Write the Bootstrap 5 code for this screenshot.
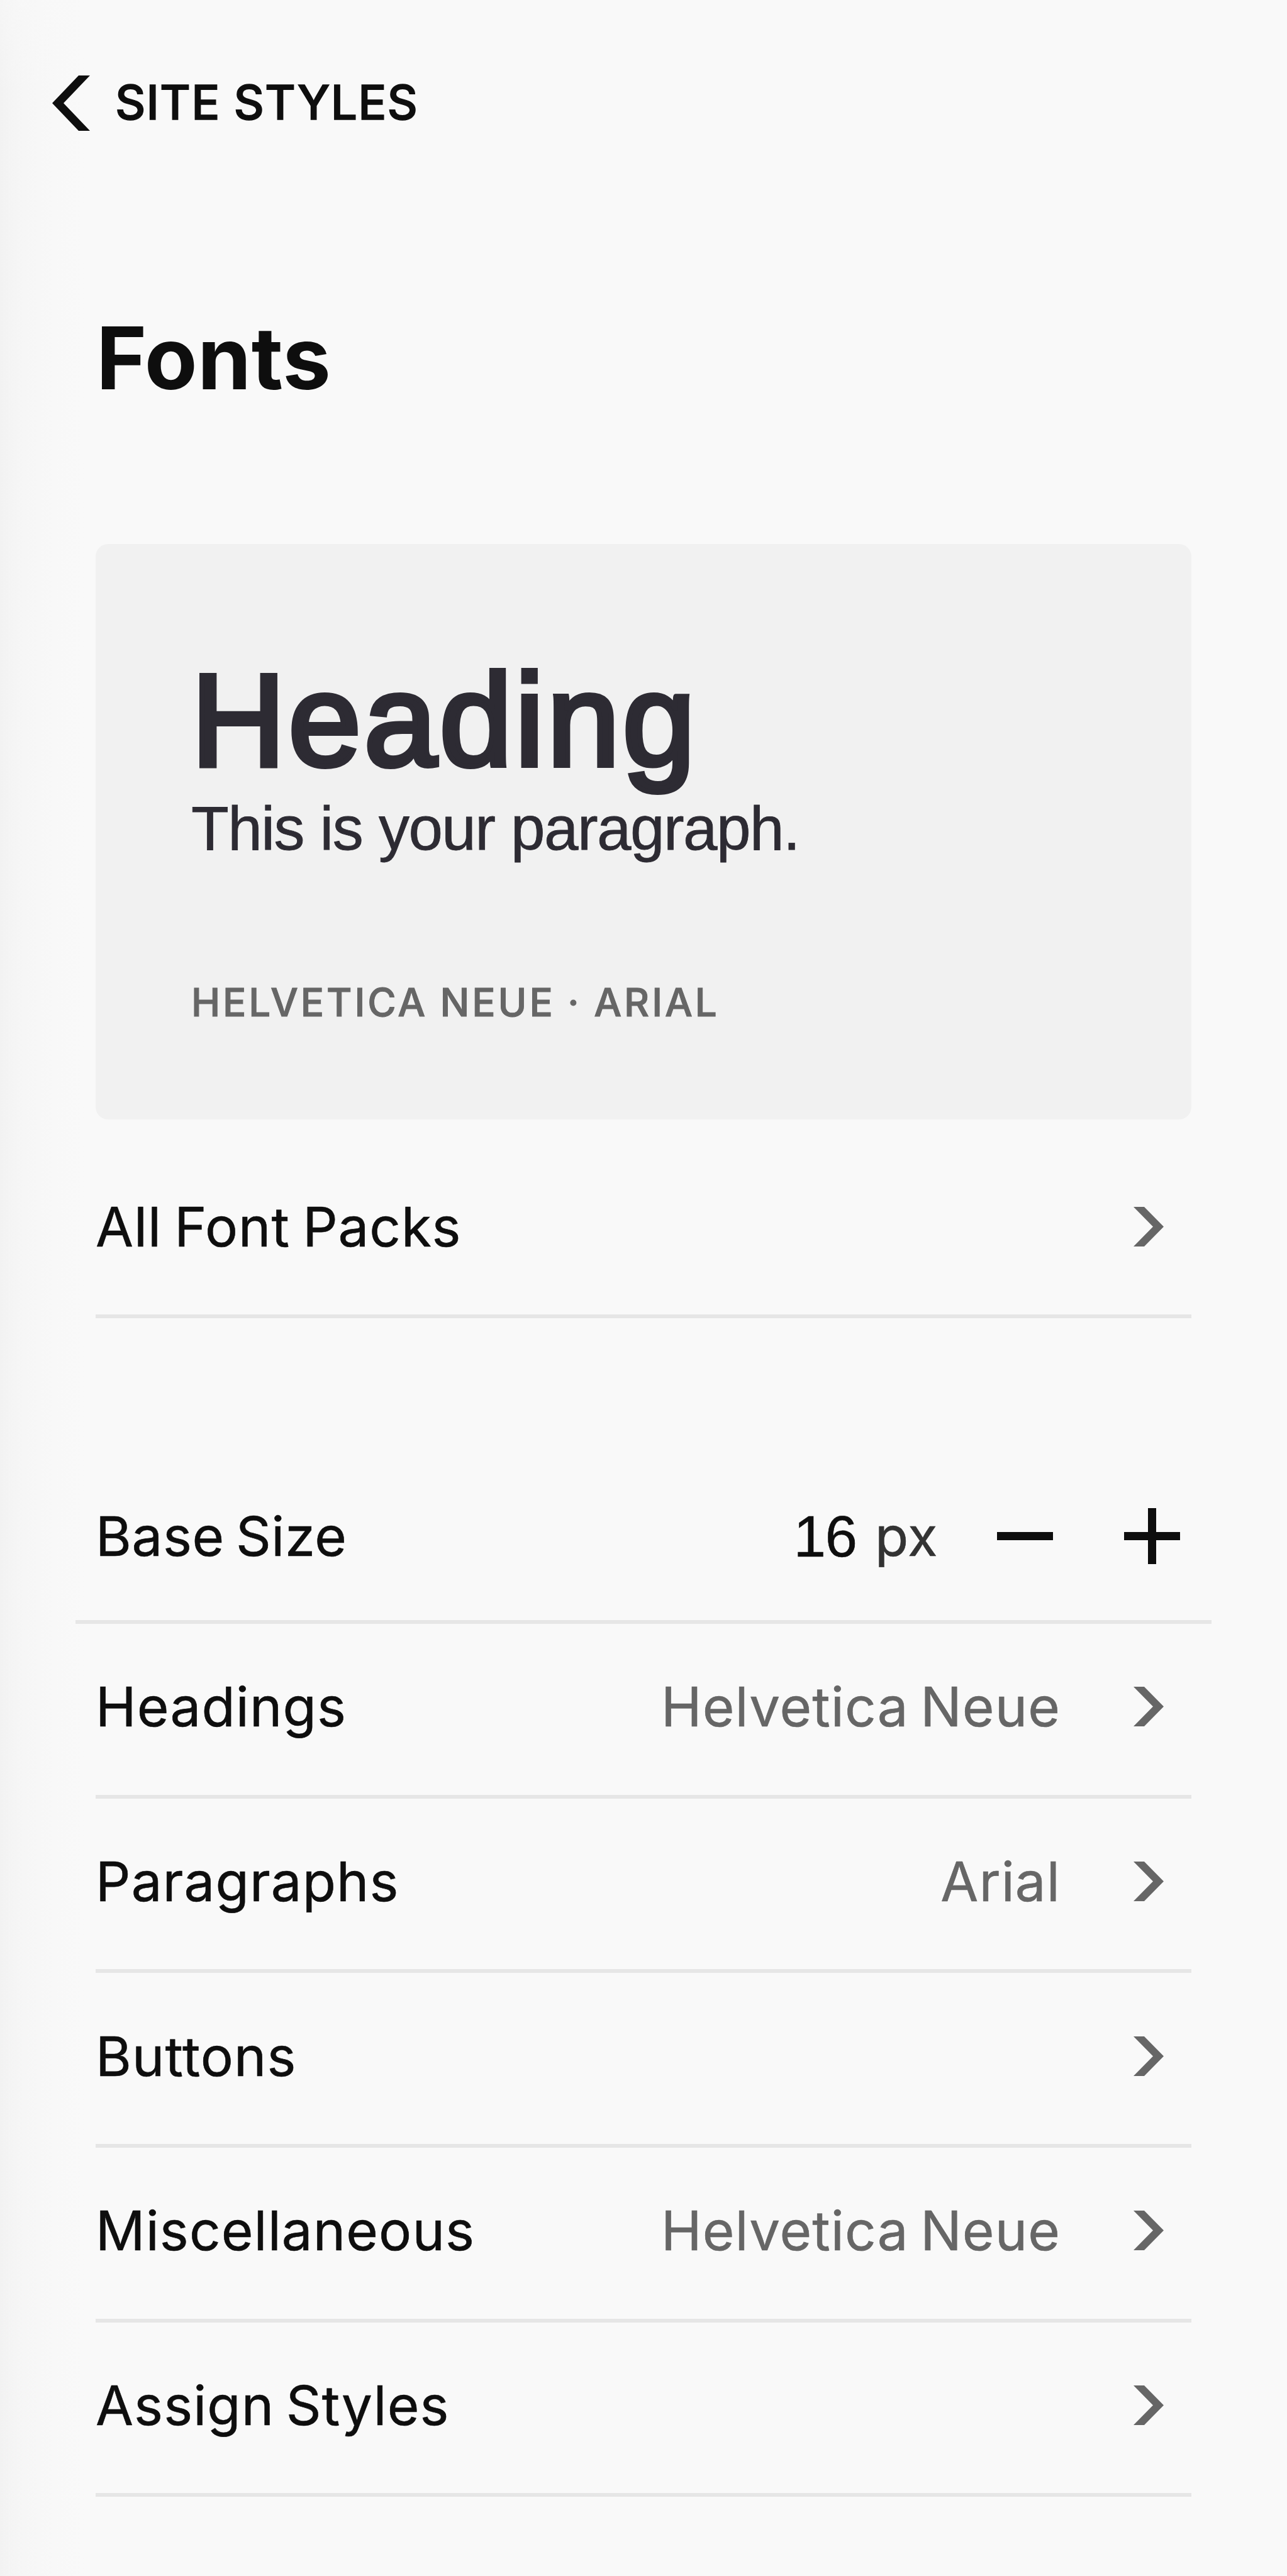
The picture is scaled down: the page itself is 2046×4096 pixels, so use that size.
<!DOCTYPE html>
<html lang="en">
<head>
  <meta charset="UTF-8">
  <meta name="viewport" content="width=device-width, initial-scale=1.0">
  <title>Site Styles - Fonts</title>
  <link href="https://cdn.jsdelivr.net/npm/bootstrap@5.3.0/dist/css/bootstrap.min.css" rel="stylesheet">
  <style>
    body {
      background: #f9f9f9;
      color: #0e0e0e;
      font-family: Inter, "Liberation Sans", sans-serif;
      font-size: 87px;
      line-height: 1;
    }
    /* soft shadow along the left edge, fading out at the top */
    .panel {
      height: 4096px;
      padding: 0 152px;
      background:
        linear-gradient(to bottom, rgba(249, 249, 249, .5), rgba(249, 249, 249, 0) 150px),
        linear-gradient(to right, #f2f2f2 0, #f4f4f4 14px, #f5f5f5 25px, #f6f6f6 41px, #f7f7f7 60px, #f8f8f8 88px, #f9f9f9 134px);
    }
    .back-link {
      height: 328px;
      margin-left: -69px;
      gap: 40px;
      color: inherit;
      font-size: 75px;
      font-weight: 500;
      letter-spacing: 1.1px;
      -webkit-text-stroke: 1.4px;
    }
    .back-link span { padding-bottom: 3px; }
    .panel-title { height: 537px; padding: 173px 0 0 1px; font-size: 137px; font-weight: 700; letter-spacing: .3px; line-height: 1; }
    .font-card { height: 915px; padding: 165px 152px 0; background: #f1f1f1; border-radius: 20px; color: #2d2b33; font-family: "Liberation Sans", Arial, sans-serif; }
    .sample-heading { height: 232px; font-size: 207.5px; line-height: 230px; letter-spacing: 4.7px; font-weight: 400; -webkit-text-stroke: 8px #2d2b33; }
    .sample-text { height: 110px; font-size: 98px; line-height: 110px; letter-spacing: -1.55px; -webkit-text-stroke: .8px; }
    .sample-fonts { padding-top: 191px; color: #666; font-family: Inter, sans-serif; font-size: 62px; font-weight: 500; letter-spacing: 3.9px; word-spacing: -1px; -webkit-text-stroke: 1px; }
    .option { height: 277.7px; padding-bottom: 8px; border-bottom: 6px solid #e6e6e6; letter-spacing: 1.1px; word-spacing: -7px; -webkit-text-stroke: .6px; }
    .option-packs { height: 316px; padding: 30px 0 0; letter-spacing: .9px; word-spacing: -5px; }
    .option-size { height: 273px; margin: 213px -32px 0; padding: 0 50px 0 32px; letter-spacing: .6px; }
    .value { color: #666; gap: 116px; padding-right: 44px; }
    .size-number { font-family: "Liberation Sans", sans-serif; font-size: 92px; letter-spacing: -1px; }
    .size-unit { color: #333; margin: 0 94px 0 29px; }
    .plus { margin-left: 113px; }
    svg { display: block; flex-shrink: 0; }
  </style>
</head>
<body>
  <main class="panel">
    <a href="#" class="back-link d-flex align-items-center text-decoration-none">
      <svg width="60" height="88" viewBox="0 0 60 88" fill="#0e0e0e"><path d="M42 0H60L18 44L60 88H42L0 44Z"/></svg>
      <span>SITE STYLES</span>
    </a>
    <h1 class="panel-title mb-0">Fonts</h1>

    <section class="font-card">
      <div class="sample-heading">Heading</div>
      <div class="sample-text">This is your paragraph.</div>
      <div class="sample-fonts">HELVETICA NEUE · ARIAL</div>
    </section>

    <div class="option option-packs d-flex align-items-center justify-content-between">
      <span>All Font Packs</span>
      <div class="value d-flex align-items-center">
        <svg width="48" height="63" viewBox="0 0 48 63" fill="#666"><path d="M0 0H17L48 31.5L17 63H0L31 31.5Z"/></svg>
      </div>
    </div>

    <div class="option option-size d-flex align-items-center">
      <span class="me-auto">Base Size</span>
      <span class="size-number">16</span>
      <span class="size-unit">px</span>
      <svg class="minus" width="89" height="89" viewBox="0 0 89 89" fill="#0e0e0e"><path d="M0 38H89V51H0Z"/></svg>
      <svg class="plus" width="89" height="89" viewBox="0 0 89 89" fill="#0e0e0e"><path d="M38 0H51V38H89V51H51V89H38V51H0V38H38Z"/></svg>
    </div>
    <div class="option d-flex align-items-center justify-content-between">
      <span>Headings</span>
      <div class="value d-flex align-items-center">
        <span>Helvetica Neue</span>
        <svg width="48" height="63" viewBox="0 0 48 63" fill="#666"><path d="M0 0H17L48 31.5L17 63H0L31 31.5Z"/></svg>
      </div>
    </div>
    <div class="option d-flex align-items-center justify-content-between">
      <span>Paragraphs</span>
      <div class="value d-flex align-items-center">
        <span>Arial</span>
        <svg width="48" height="63" viewBox="0 0 48 63" fill="#666"><path d="M0 0H17L48 31.5L17 63H0L31 31.5Z"/></svg>
      </div>
    </div>
    <div class="option d-flex align-items-center justify-content-between">
      <span>Buttons</span>
      <div class="value d-flex align-items-center">
        <svg width="48" height="63" viewBox="0 0 48 63" fill="#666"><path d="M0 0H17L48 31.5L17 63H0L31 31.5Z"/></svg>
      </div>
    </div>
    <div class="option d-flex align-items-center justify-content-between">
      <span>Miscellaneous</span>
      <div class="value d-flex align-items-center">
        <span>Helvetica Neue</span>
        <svg width="48" height="63" viewBox="0 0 48 63" fill="#666"><path d="M0 0H17L48 31.5L17 63H0L31 31.5Z"/></svg>
      </div>
    </div>
    <div class="option d-flex align-items-center justify-content-between">
      <span>Assign Styles</span>
      <div class="value d-flex align-items-center">
        <svg width="48" height="63" viewBox="0 0 48 63" fill="#666"><path d="M0 0H17L48 31.5L17 63H0L31 31.5Z"/></svg>
      </div>
    </div>
  </main>
  <script src="https://cdn.jsdelivr.net/npm/bootstrap@5.3.0/dist/js/bootstrap.bundle.min.js"></script>
</body>
</html>
